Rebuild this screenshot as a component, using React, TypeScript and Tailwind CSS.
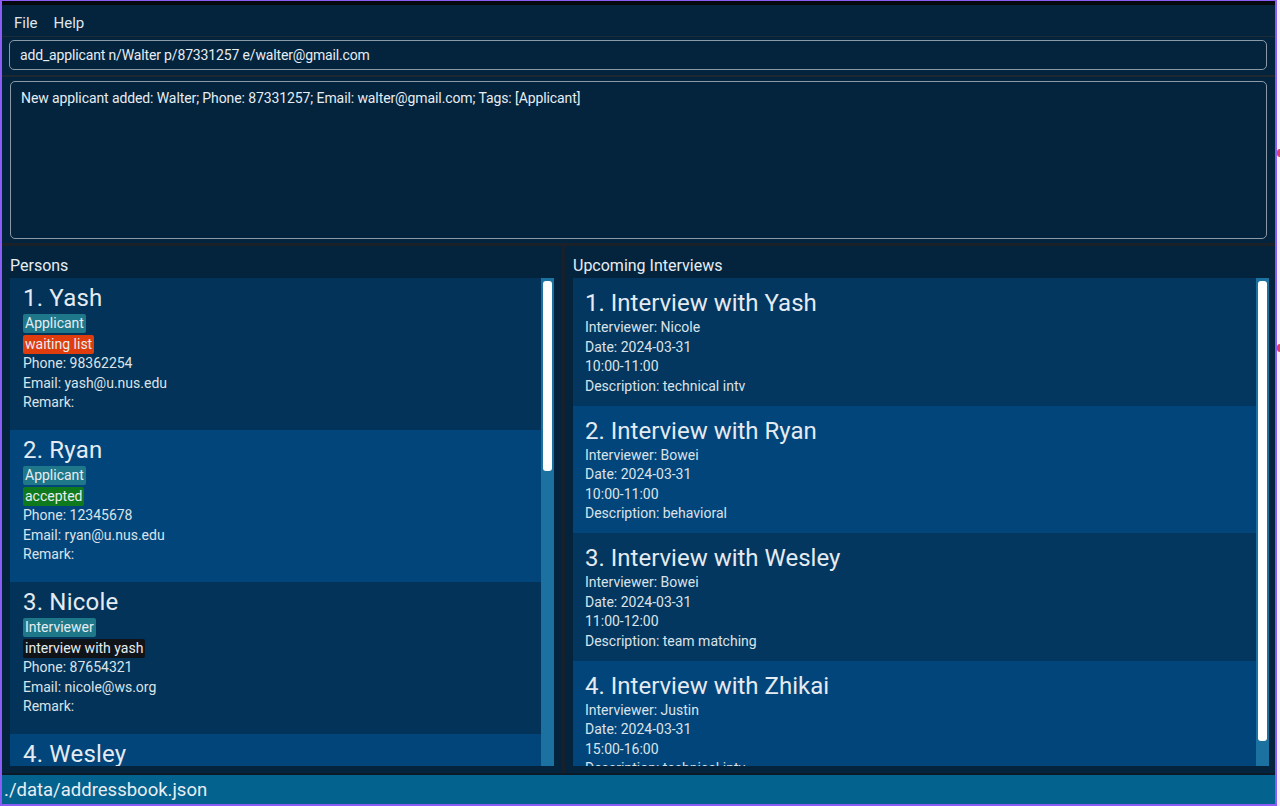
import React from "react";

type Tag = { label: string; cls: string };
type Person = { name: string; tags: Tag[]; phone: string; email: string };

const TEAL = "bg-[#1f7889]";

const persons: Person[] = [
  {
    name: "1. Yash",
    tags: [
      { label: "Applicant", cls: TEAL },
      { label: "waiting list", cls: "bg-[#e03d0e]" },
    ],
    phone: "98362254",
    email: "yash@u.nus.edu",
  },
  {
    name: "2. Ryan",
    tags: [
      { label: "Applicant", cls: TEAL },
      { label: "accepted", cls: "bg-[#0f7a1d]" },
    ],
    phone: "12345678",
    email: "ryan@u.nus.edu",
  },
  {
    name: "3. Nicole",
    tags: [
      { label: "Interviewer", cls: TEAL },
      { label: "interview with yash", cls: "bg-[#101418]" },
    ],
    phone: "87654321",
    email: "nicole@ws.org",
  },
  {
    name: "4. Wesley",
    tags: [{ label: "Applicant", cls: TEAL }],
    phone: "11112222",
    email: "wesley@u.nus.edu",
  },
];

const interviews = [
  { title: "1. Interview with Yash", interviewer: "Nicole", date: "2024-03-31", time: "10:00-11:00", desc: "technical intv" },
  { title: "2. Interview with Ryan", interviewer: "Bowei", date: "2024-03-31", time: "10:00-11:00", desc: "behavioral" },
  { title: "3. Interview with Wesley", interviewer: "Bowei", date: "2024-03-31", time: "11:00-12:00", desc: "team matching" },
  { title: "4. Interview with Zhikai", interviewer: "Justin", date: "2024-03-31", time: "15:00-16:00", desc: "technical intv" },
];

function PersonCard({ p, i }: { p: Person; i: number }) {
  return (
    <div
      className={`h-[152px] shrink-0 pl-[13px] pt-[5px] ${i % 2 === 0 ? "bg-[#033358]" : "bg-[#02457a]"}`}
    >
      <div className="text-[24px] leading-[30px] text-[#e4ebf2] tracking-[0.2px]">{p.name}</div>
      <div className="flex flex-col items-start gap-[2px] mt-[1px]">
        {p.tags.map((t) => (
          <span
            key={t.label}
            className={`${t.cls} h-[19px] leading-[19px] px-[2px] rounded-[2px] text-[14px] text-[#e6edf3]`}
          >
            {t.label}
          </span>
        ))}
      </div>
      <div className="text-[14px] leading-[19.5px] text-[#dbe3ea]">
        <div>Phone: {p.phone}</div>
        <div>Email: {p.email}</div>
        <div>Remark:</div>
      </div>
    </div>
  );
}

function InterviewCard({ iv, i }: { iv: (typeof interviews)[number]; i: number }) {
  return (
    <div
      className={`h-[127.5px] shrink-0 pl-[12px] pt-[10px] ${i % 2 === 0 ? "bg-[#03375f]" : "bg-[#02457a]"}`}
    >
      <div className="text-[24px] leading-[30px] text-[#e4ebf2]">{iv.title}</div>
      <div className="text-[14px] leading-[19.5px] text-[#dbe3ea]">
        <div>Interviewer: {iv.interviewer}</div>
        <div>Date: {iv.date}</div>
        <div>{iv.time}</div>
        <div>Description: {iv.desc}</div>
      </div>
    </div>
  );
}

function ScrollBar({ thumbH }: { thumbH: number }) {
  return (
    <div className="w-[13px] shrink-0 bg-[#1b71a0] pt-[3px] flex justify-center">
      <div className="w-[9px] rounded-[3px] bg-white" style={{ height: thumbH }} />
    </div>
  );
}

export default function App() {
  return (
    <div
      className="relative w-[1280px] h-[806px] bg-[#f4f1fb] overflow-hidden"
      style={{ fontFamily: "Roboto, 'Liberation Sans', sans-serif" }}
    >
      <span className="absolute left-[1277px] top-[149px] w-[6px] h-[8px] rounded-full bg-[#e0406a]" />
      <span className="absolute left-[1277px] top-[344px] w-[6px] h-[8px] rounded-full bg-[#e0406a]" />
      <div className="w-[1277px] h-[806px] border-l-2 border-r-2 border-b-2 border-t border-[#8b5cf6] flex flex-col bg-[#04233d]">
        <div className="h-[4px] bg-[#05080c] shrink-0" />
        {/* Menu bar */}
        <div className="h-[31px] shrink-0 flex items-center gap-[16px] pl-[12px] pt-[4px] text-[15px] leading-[20px] text-[#dfe6ee]">
          <span>File</span>
          <span>Help</span>
        </div>
        <div className="h-[1px] bg-[#1d2c39] shrink-0" />
        {/* Command box */}
        <div className="h-[38px] shrink-0 pl-[7px] pr-[8px] pt-[3px]">
          <div className="h-[30px] rounded-[5px] border border-[#8c9aa6] flex items-center pl-[10px] text-[14px] tracking-[-0.15px] text-[#e6edf3]">
            add_applicant n/Walter p/87331257 e/walter@gmail.com
          </div>
        </div>
        <div className="h-[2px] bg-[#1d2830] shrink-0" />
        {/* Result box */}
        <div className="h-[166px] shrink-0 pl-[8px] pr-[8px] pt-[4px]">
          <div className="h-[158px] rounded-[5px] border border-[#8c9aa6] pl-[10px] pt-[6px] text-[14px] leading-[20px] tracking-[-0.1px] text-[#e6edf3]">
            New applicant added: Walter; Phone: 87331257; Email: walter@gmail.com; Tags: [Applicant]
          </div>
        </div>
        <div className="h-[3px] bg-[#1b2129] shrink-0" />
        {/* Lower panels */}
        <div className="flex-1 flex min-h-0">
          <div className="w-[560px] shrink-0 flex flex-col pl-[8px] pr-[8px]">
            <div className="h-[32px] shrink-0 flex items-end pb-[2px] text-[16px] leading-[20px] text-[#e6edf3]">Persons</div>
            <div className="flex-1 flex min-h-0 mb-[7px] overflow-hidden">
              <div className="flex-1 flex flex-col overflow-hidden">
                {persons.map((p, i) => (
                  <PersonCard key={p.name} p={p} i={i} />
                ))}
              </div>
              <ScrollBar thumbH={190} />
            </div>
          </div>
          <div className="w-[3px] bg-[#17202b] shrink-0" />
          <div className="flex-1 flex flex-col pl-[8px] pr-[6px]">
            <div className="h-[32px] shrink-0 flex items-end pb-[2px] text-[16px] leading-[20px] text-[#e6edf3]">Upcoming Interviews</div>
            <div className="flex-1 flex min-h-0 mb-[7px] overflow-hidden">
              <div className="flex-1 flex flex-col overflow-hidden">
                {interviews.map((iv, i) => (
                  <InterviewCard key={iv.title} iv={iv} i={i} />
                ))}
              </div>
              <ScrollBar thumbH={460} />
            </div>
          </div>
        </div>
        <div className="h-[2px] bg-[#0b1a26] shrink-0" />
        {/* Status bar */}
        <div className="h-[29px] shrink-0 bg-[#04628e] flex items-center pl-[2px] text-[18.5px] leading-[24px] text-[#e8eef3]">
          ./data/addressbook.json
        </div>
      </div>
    </div>
  );
}
